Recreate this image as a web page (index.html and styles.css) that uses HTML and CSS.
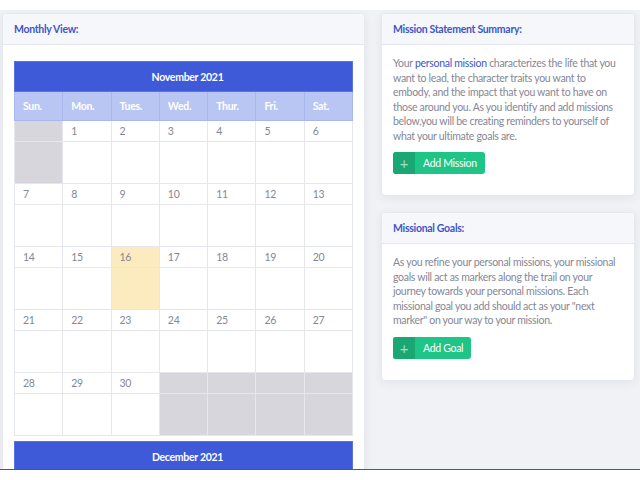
FILE: index.html
```html
<!DOCTYPE html>
<html>
<head>
<meta charset="utf-8">
<link rel="stylesheet" href="styles.css">
</head>
<body>
<div class="page">
  <div class="topbar"></div>
  <main class="main">
    <section class="card card-calendar">
      <div class="card-header"><h6>Monthly View:</h6></div>
      <div class="card-body cal-body">
        <table class="cal">
          <tr><th colspan="7" class="cal-title">November 2021</th></tr>
          <tr class="dow"><th>Sun.</th><th>Mon.</th><th>Tues.</th><th>Wed.</th><th>Thur.</th><th>Fri.</th><th>Sat.</th></tr>
          <tr class="num"><td class="off"></td><td>1</td><td>2</td><td>3</td><td>4</td><td>5</td><td>6</td></tr>
          <tr class="blank"><td class="off"></td><td></td><td></td><td></td><td></td><td></td><td></td></tr>
          <tr class="num"><td>7</td><td>8</td><td>9</td><td>10</td><td>11</td><td>12</td><td>13</td></tr>
          <tr class="blank"><td></td><td></td><td></td><td></td><td></td><td></td><td></td></tr>
          <tr class="num"><td>14</td><td>15</td><td class="today">16</td><td>17</td><td>18</td><td>19</td><td>20</td></tr>
          <tr class="blank"><td></td><td></td><td class="today"></td><td></td><td></td><td></td><td></td></tr>
          <tr class="num"><td>21</td><td>22</td><td>23</td><td>24</td><td>25</td><td>26</td><td>27</td></tr>
          <tr class="blank"><td></td><td></td><td></td><td></td><td></td><td></td><td></td></tr>
          <tr class="num"><td>28</td><td>29</td><td>30</td><td class="off"></td><td class="off"></td><td class="off"></td><td class="off"></td></tr>
          <tr class="blank"><td></td><td></td><td></td><td class="off"></td><td class="off"></td><td class="off"></td><td class="off"></td></tr>
        </table>
        <table class="cal">
          <tr><th colspan="7" class="cal-title">December 2021</th></tr>
        </table>
      </div>
    </section>
    <div class="side">
      <section class="card">
        <div class="card-header"><h6>Mission Statement Summary:</h6></div>
        <div class="card-body">
          <p>Your <a href="#">personal mission</a> characterizes the life that you want to lead, the character traits you want to embody, and the impact that you want to have on those around you. As you identify and add missions below,you will be creating reminders to yourself of what your ultimate goals are.</p>
          <a class="btn" href="#"><span class="btn-icon">+</span><span class="btn-text">Add Mission</span></a>
        </div>
      </section>
      <section class="card">
        <div class="card-header"><h6>Missional Goals:</h6></div>
        <div class="card-body">
          <p>As you refine your personal missions, your missional goals will act as markers along the trail on your journey towards your personal missions. Each missional goal you add should act as your "next marker" on your way to your mission.</p>
          <a class="btn" href="#"><span class="btn-icon">+</span><span class="btn-text">Add Goal</span></a>
        </div>
      </section>
    </div>
  </main>
  <div class="footer"></div>
</div>
</body>
</html>
```
FILE: styles.css
```css
* { box-sizing: border-box; }
html, body { margin: 0; padding: 0; background: #ffffff; }
body { font-family: Lato, "Open Sans", sans-serif; color: #858796; letter-spacing: -0.3px; }
.page { width: 640px; height: 480px; overflow: hidden; display: flex; flex-direction: column; }
.topbar { height: 10px; background: #ffffff; flex: none; }
.main {
  height: 459px; flex: none; overflow: hidden;
  background: #f1f2f6;
  display: flex; align-items: flex-start; gap: 16px;
  padding: 3px 5px 0 2px;
}
.footer { height: 1px; background: #3e6a45; flex: none; }
.card {
  background: #ffffff;
  border: 1px solid #e6e8ef;
  border-radius: 4px;
  box-shadow: 0 2px 10px rgba(58, 59, 69, 0.08);
  overflow: hidden;
}
.card-calendar { width: 363px; flex: none; }
.side { width: 254px; flex: none; display: flex; flex-direction: column; gap: 16px; }
.card-header {
  height: 31px;
  background: #f6f7fb;
  border-bottom: 1px solid #e3e6f0;
  padding: 0 11px;
  display: flex; align-items: center;
}
.card-header h6 { margin: 0; font-size: 10.5px; font-weight: 700; color: #3d56c9; }
.card-body { padding: 11px 11px 21px; }
.cal-body { padding: 16px 11px 0; }
.card-body p { margin: 0 0 9px; font-size: 10.5px; line-height: 14.5px; color: #858796; }
.card-body p a { color: #3d56c9; text-decoration: none; }
.btn {
  display: inline-flex; height: 22px; border-radius: 3px; overflow: hidden;
  background: #1fc487; color: #ffffff; text-decoration: none; font-size: 10.5px;
}
.btn-icon {
  width: 22px; display: flex; align-items: center; justify-content: center;
  background: #19a874; font-size: 15px; color: rgba(255,255,255,0.6);
}
.btn-text { display: flex; align-items: center; padding: 0 8px; }
.cal { width: 339px; border-collapse: collapse; table-layout: fixed; margin-bottom: 5px; }
.cal th, .cal td { border: 1px solid #e6e7ee; padding: 0 0 0 8px; text-align: left; }
.cal-title {
  height: 30px; background: #3e5ad8; color: #ffffff;
  text-align: center !important; font-size: 10.5px; font-weight: 700;
  border-color: #5a73de !important;
}
.dow th { height: 29px; background: #b9c6f3; color: #ffffff; font-size: 10.5px; font-weight: 700; border-color: #a8b8ee; }
.num td { height: 21px; font-size: 10.5px; color: #858796; }
.blank td { height: 42px; }
.cal td.off { background: #d6d6dc; }
.cal td.today { background: #fcebbf; }
```
